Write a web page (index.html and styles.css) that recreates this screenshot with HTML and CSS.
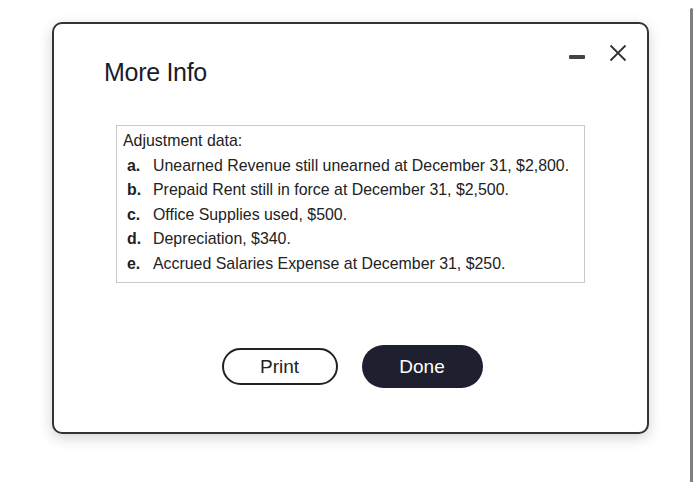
FILE: index.html
```html
<!DOCTYPE html>
<html>
<head>
<meta charset="utf-8">
<link rel="stylesheet" href="styles.css">
</head>
<body>
<div class="page">
  <div class="dialog">
    <div class="header">
      <h1 class="title">More Info</h1>
      <div class="controls">
        <span class="minimize"></span>
        <svg class="close" width="18" height="18" viewBox="0 0 18 18">
          <path d="M1.5 1.5 L16.5 16.5 M16.5 1.5 L1.5 16.5" stroke="#333" stroke-width="1.8" fill="none"/>
        </svg>
      </div>
    </div>
    <div class="info">
      <div class="info-head">Adjustment data:</div>
      <div class="row"><span class="lbl">a.</span><span>Unearned Revenue still unearned at December 31, $2,800.</span></div>
      <div class="row"><span class="lbl">b.</span><span>Prepaid Rent still in force at December 31, $2,500.</span></div>
      <div class="row"><span class="lbl">c.</span><span>Office Supplies used, $500.</span></div>
      <div class="row"><span class="lbl">d.</span><span>Depreciation, $340.</span></div>
      <div class="row"><span class="lbl">e.</span><span>Accrued Salaries Expense at December 31, $250.</span></div>
    </div>
    <div class="actions">
      <button class="btn print">Print</button>
      <button class="btn done">Done</button>
    </div>
  </div>
  <div class="scrollbar"></div>
</div>
</body>
</html>
```

FILE: styles.css
```css
html, body {
  margin: 0;
  padding: 0;
  background: #fff;
  font-family: "Liberation Sans", Arial, sans-serif;
  color: #222;
}
.page {
  display: flex;
  align-items: flex-start;
  height: 482px;
  overflow: hidden;
}
.dialog {
  box-sizing: border-box;
  width: 597px;
  height: 412px;
  margin: 22px 0 0 52px;
  border: 2px solid #333;
  border-radius: 10px;
  background: #fff;
  box-shadow: 0 4px 14px rgba(0,0,0,0.18);
  display: flex;
  flex-direction: column;
}
.header {
  display: flex;
  justify-content: space-between;
  align-items: flex-start;
  padding: 20px 20px 0 50px;
  height: 59px;
}
.title {
  margin: 14px 0 0 0;
  font-size: 25px;
  font-weight: normal;
  line-height: 28px;
  letter-spacing: -0.3px;
  color: #1a1b2b;
}
.controls {
  display: flex;
  align-items: center;
  gap: 24px;
  margin-top: 0;
}
.minimize {
  display: block;
  width: 16px;
  height: 4px;
  background: #444;
  border-radius: 1px;
  margin-top: 7px;
}
.close {
  display: block;
}
.info {
  box-sizing: border-box;
  margin: 22px 62px 0 62px;
  height: 158px;
  border: 1px solid #c8c8c8;
  padding: 3px 6px 0 6px;
  font-size: 15.9px;
  line-height: 24.6px;
  color: #222;
}
.row {
  display: flex;
}
.lbl {
  font-weight: bold;
  width: 30px;
  padding-left: 4px;
  box-sizing: border-box;
  flex: none;
}
.actions {
  display: flex;
  justify-content: center;
  align-items: center;
  gap: 24px;
  margin-top: 62px;
  padding-left: 3px;
  height: 43px;
}
.btn {
  font-family: "Liberation Sans", Arial, sans-serif;
  font-size: 19px;
  border-radius: 22px;
  cursor: pointer;
}
.print {
  width: 116px;
  height: 37px;
  border: 2px solid #222;
  background: #fff;
  color: #222;
}
.done {
  width: 121px;
  height: 43px;
  border: none;
  background: #1e2030;
  color: #fff;
}
.scrollbar {
  width: 3px;
  height: 474px;
  margin: 8px 0 0 41px;
  background: #7f7f7f;
  border-radius: 2px 2px 0 0;
}
```
